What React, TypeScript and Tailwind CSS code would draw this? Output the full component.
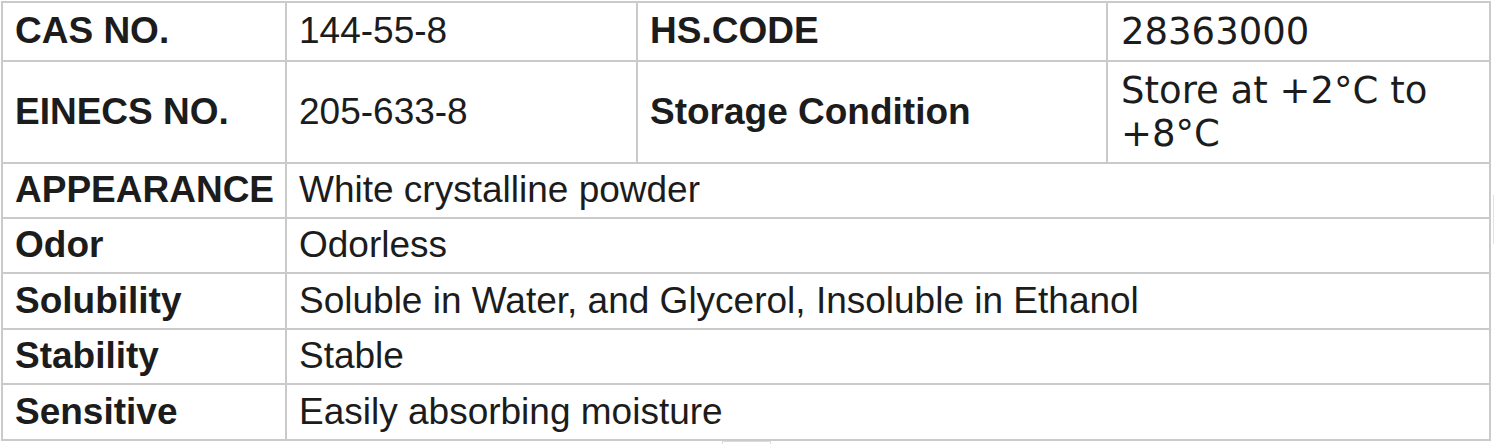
import React from "react";

const arial = "font-['Liberation_Sans',Arial,sans-serif]";
const verdana = "font-['DejaVu_Sans',Verdana,sans-serif]";

const th = `${arial} font-bold text-[37px] leading-[43px] text-[#1c1c1c] border-r-2 border-b-2 border-[#cacaca] pl-[12px] pr-[10px] pt-0 pb-[2px] align-middle text-left whitespace-nowrap`;
const td = `${arial} font-normal text-[37px] leading-[43px] text-[#1c1c1c] border-r-2 border-b-2 border-[#cacaca] pl-[12px] pr-[10px] pt-0 pb-[2px] align-middle text-left`;
const tdV = `${verdana} font-normal text-[37px] leading-[43px] text-[#1c1c1c] border-r-2 border-b-2 border-[#cacaca] pl-[13px] pr-[10px] pt-0 pb-0 align-middle text-left`;

const rows: [string, string][] = [
  ["APPEARANCE", "White crystalline powder"],
  ["Odor", "Odorless"],
  ["Solubility", "Soluble in Water, and Glycerol, Insoluble in Ethanol"],
  ["Stability", "Stable"],
  ["Sensitive", "Easily absorbing moisture"],
];
const rowHeights = ["h-[55px]", "h-[55px]", "h-[56px]", "h-[55px]", "h-[56px]"];

export default function App() {
  return (
    <div className="relative w-[1495px] h-[444px] bg-white overflow-hidden">
      <div className="pl-[1px] pt-[1px]">
        <table className="table-fixed border-separate border-spacing-0 border-l-2 border-t-2 border-[#cacaca] w-[1490px]">
          <colgroup>
            <col className="w-[284px]" />
            <col className="w-[351px]" />
            <col className="w-[470px]" />
            <col className="w-[383px]" />
          </colgroup>
          <tbody>
            <tr className="h-[59px]">
              <th className={th}>CAS NO.</th>
              <td className={td}>144-55-8</td>
              <th className={th}>HS.CODE</th>
              <td className={tdV}>28363000</td>
            </tr>
            <tr className="h-[102px]">
              <th className={th}>EINECS NO.</th>
              <td className={td}>205-633-8</td>
              <th className={th}>Storage Condition</th>
              <td className={tdV}>Store at +2°C to +8°C</td>
            </tr>
            {rows.map(([k, v], i) => (
              <tr key={k} className={rowHeights[i]}>
                <th className={th}>{k}</th>
                <td className={td} colSpan={3}>
                  {v}
                </td>
              </tr>
            ))}
          </tbody>
        </table>
      </div>
      <div className="absolute left-[722px] top-[441px] w-[49px] h-[6px] border-l border-r border-t border-[#dcdcdc]" />
      <div className="absolute left-[1493px] top-[195px] w-[1px] h-[49px] bg-[#e2e2e2]" />
    </div>
  );
}
